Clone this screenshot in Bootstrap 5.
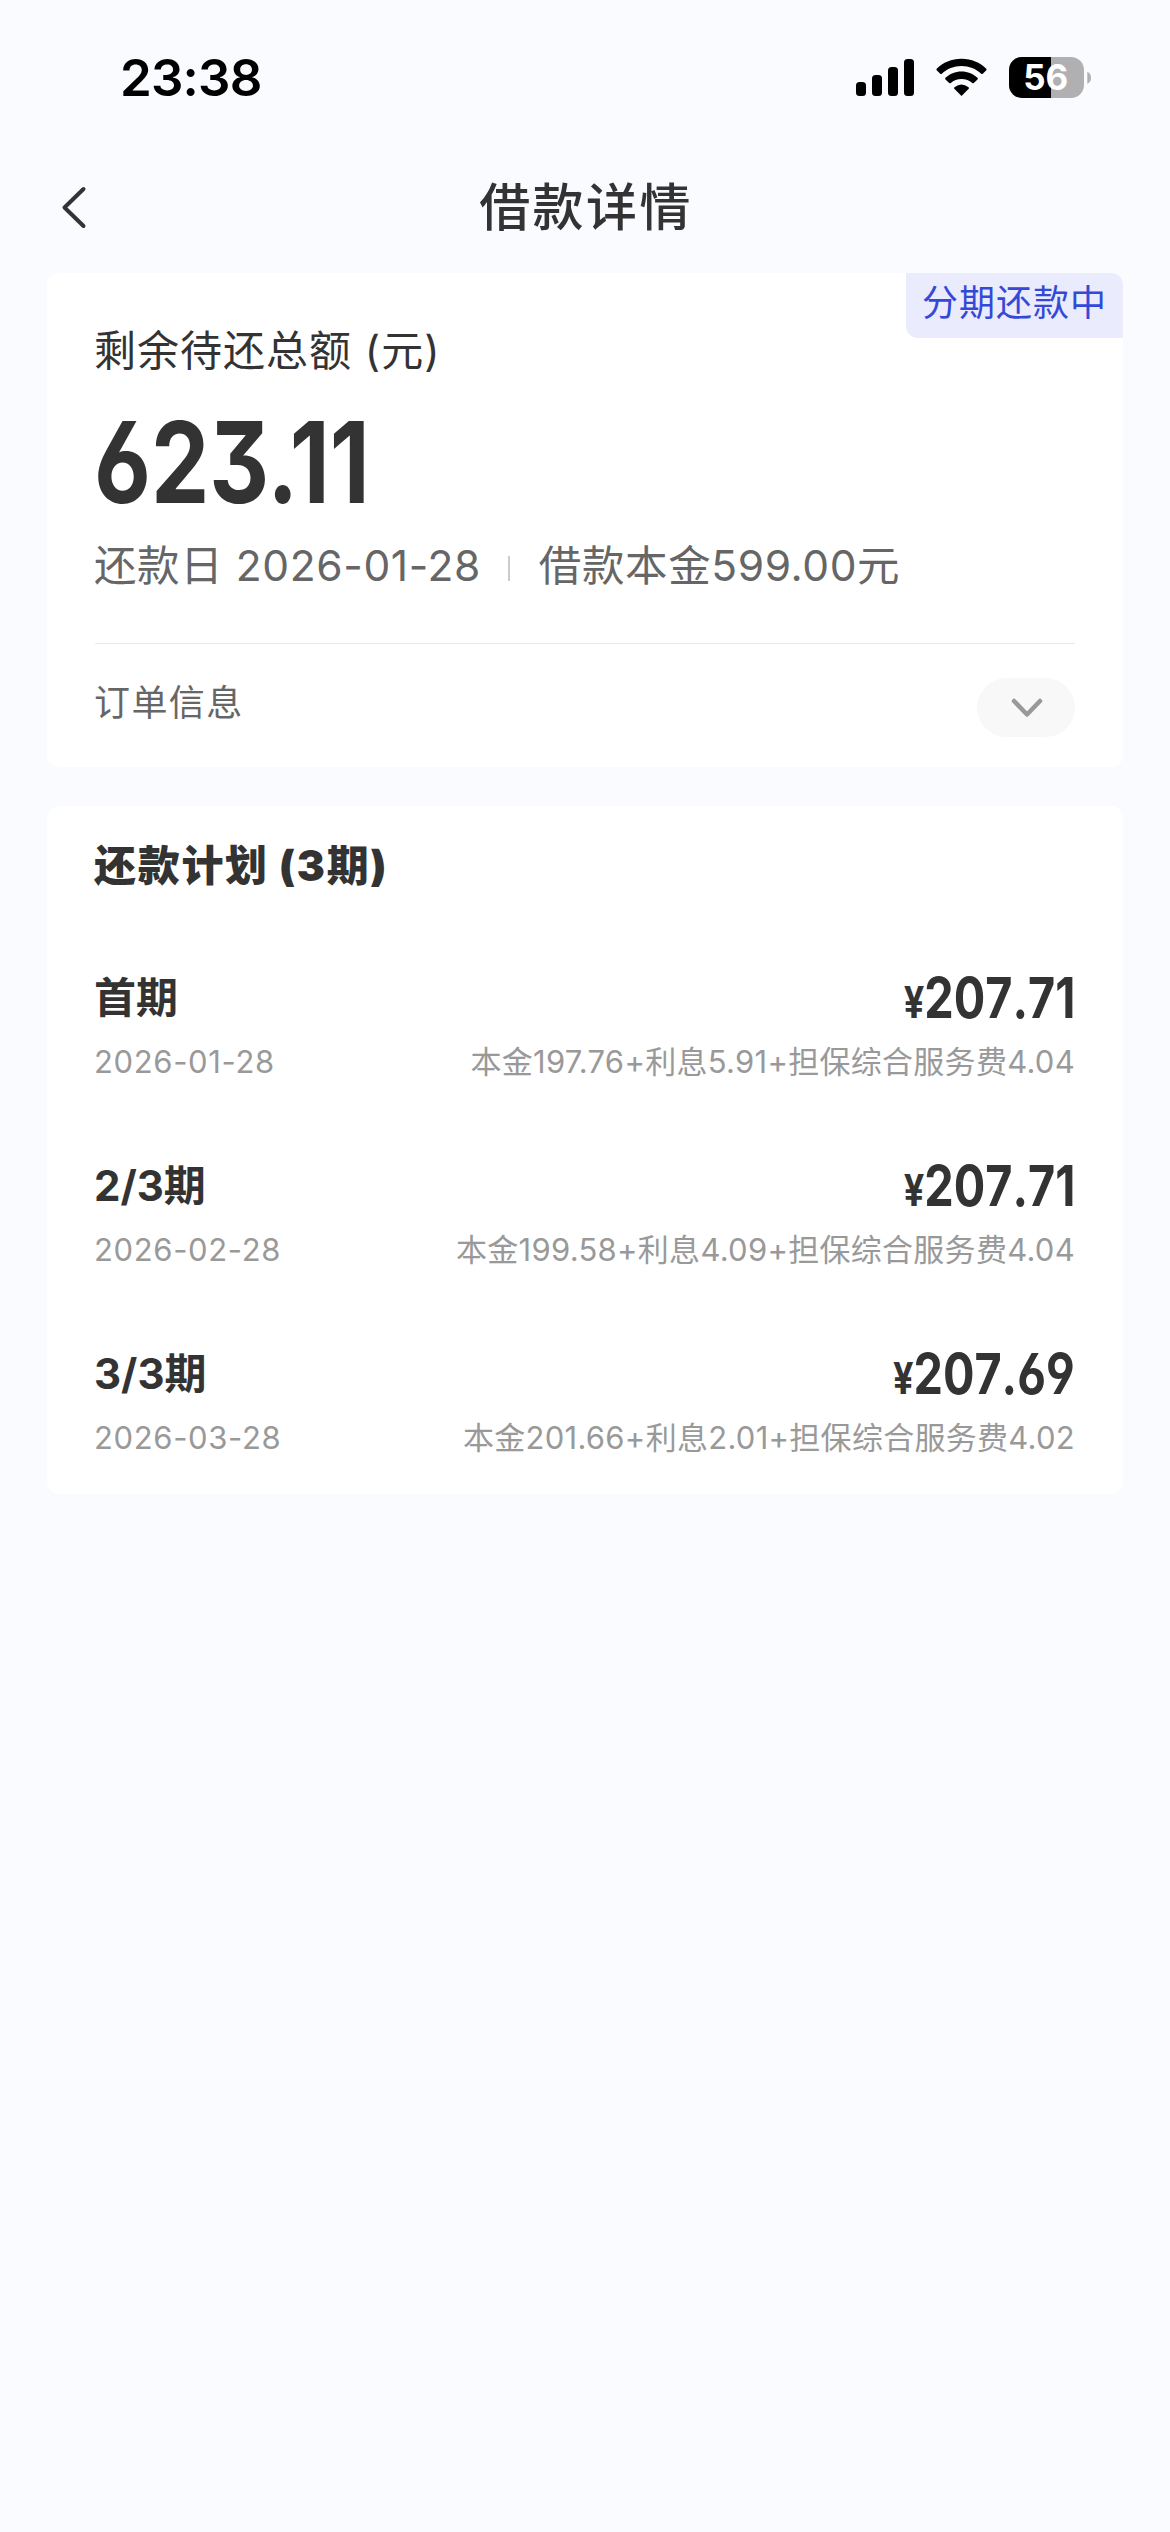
<!DOCTYPE html>
<html lang="zh-CN">
<head>
<meta charset="utf-8">
<meta name="viewport" content="width=device-width, initial-scale=1">
<title>借款详情</title>
<link href="https://cdn.jsdelivr.net/npm/bootstrap@5.3.0/dist/css/bootstrap.min.css" rel="stylesheet">
<style>
  body { background: #fafbff; color: #333; font-family: Inter, "Noto Sans CJK SC", sans-serif; min-height: 2532px; }
  .status-bar { height: 141px; padding: 14px 79px 0 120px; color: #000; }
  .clock { font-size: 51px; font-weight: 600; line-height: 60px; letter-spacing: -.8px; }
  .battery-level { font: 700 35px Inter, sans-serif; letter-spacing: 0; }
  .nav-head { height: 132px; }
  .back-link { left: 58px; top: 44px; line-height: 0; }
  .nav-name { font-size: 51px; font-weight: 500; line-height: 60px; letter-spacing: 2.4px; padding: 2px 0 0 2px; }
  .panel { margin: 0 47px 39px; padding: 0 48px 0 47px; border: 0; border-radius: 12px; background: #fff; }
  .state-tag { top: 0; right: 0; width: 217px; height: 65px; line-height: 61px; font-size: 36px; letter-spacing: 1px; color: #3549d8; background: #eaebfc; border-radius: 0 12px 0 12px; }
  .caption-line { font-size: 42px; line-height: 60px; letter-spacing: 1px; padding-top: 48px; }
  .din { font-weight: 700; font-feature-settings: "ss01", "cv03", "cv04"; }
  .total-sum { font-size: 113px; line-height: 90px; margin-top: 36px; transform: scaleX(.82); transform-origin: left; }
  .due-line { font-size: 42.5px; line-height: 60px; letter-spacing: .6px; margin-top: 29px; color: #666; }
  .tick { width: 2px; height: 25px; background: #ccc; margin: 4px 29px 0 27px; }
  .order-row { margin: 47px 0 0 1px; border-top: 1px solid #e9e9e9; height: 124px; color: #666; }
  .order-name { font-size: 36px; line-height: 50px; letter-spacing: 1.4px; margin: 0 0 5px -1px; }
  .pill { width: 98px; height: 59px; background: #f8f8f8; margin-top: 4px; }
  .plan-panel { padding-top: 30px; padding-bottom: 36px; }
  .plan-name { font-size: 42px; font-weight: 900; line-height: 60px; letter-spacing: 1.7px; margin-bottom: 72px; }
  .term { margin-bottom: 74px; }
  .term:last-child { margin-bottom: 0; }
  .term-name { font-size: 42px; font-weight: 700; line-height: 60px; }
  .term-sum { font-size: 57px; line-height: 60px; font-kerning: none; transform: scaleX(.82); transform-origin: right; }
  .term-sum span { font-size: 44px; line-height: 0; }
  .term-note { font-size: 31px; line-height: 40px; margin-top: 14px; color: #999; letter-spacing: .28px; }
  .term-date { letter-spacing: .65px; }
</style>
<script src="https://cdn.jsdelivr.net/npm/bootstrap@5.3.0/dist/js/bootstrap.bundle.min.js"></script>
</head>
<body>
<header>
  <div class="status-bar d-flex justify-content-between align-items-center">
    <span class="clock">23:38</span>
    <svg width="236" height="42" viewBox="855 57 236 42" role="img" aria-label="状态">
      <defs>
        <clipPath id="batteryBody"><rect x="1009" y="57" width="75" height="41" rx="13"/></clipPath>
      </defs>
      <rect x="856" y="82" width="10" height="14" rx="3.500"/>
      <rect x="872" y="75" width="10" height="21" rx="3.500"/>
      <rect x="888" y="67" width="10" height="29" rx="3.500"/>
      <rect x="904" y="59" width="10" height="37" rx="3.500"/>
      <path d="M961.500 96 L954.300 88.800 Q953.500 87.900 954.500 87.200 Q961.500 81.800 968.500 87.200 Q969.500 87.900 968.700 88.800 Z"/>
      <path d="M961.500 58.700 C971.500 58.700 980 62.500 986.300 68.700 Q987 69.500 986.300 70.300 L982.800 73.700 Q982 74.400 981.200 73.700 C976 68.800 969 66 961.500 66 C954 66 947 68.800 941.800 73.700 Q941 74.400 940.200 73.700 L936.700 70.300 Q936 69.500 936.700 68.700 C943 62.500 951.500 58.700 961.500 58.700 Z"/>
      <path d="M961.500 71.500 C967.800 71.500 973.300 73.900 977.500 77.800 Q978.300 78.600 977.500 79.400 L973.800 83 Q973 83.700 972.200 83 C969.400 80.500 965.600 79 961.500 79 C957.400 79 953.600 80.500 950.800 83 Q950 83.700 949.200 83 L945.500 79.400 Q944.700 78.600 945.500 77.800 C949.700 73.900 955.200 71.500 961.500 71.500 Z"/>
      <g clip-path="url(#batteryBody)">
        <rect x="1009" y="57" width="75" height="41" fill="#b0b0b2"/>
        <rect x="1009" y="57" width="42" height="41"/>
      </g>
      <path d="M1087.300 71.700 Q1091 73.200 1091 77.700 Q1091 82.200 1087.300 83.700 Z" fill="#b0b0b2"/>
      <text class="battery-level" x="1045.800" y="90.300" text-anchor="middle" fill="#fff">56</text>
    </svg>
  </div>
  <nav class="nav-head d-flex align-items-center justify-content-center position-relative">
    <a href="#" class="back-link position-absolute" aria-label="返回">
      <svg width="32" height="44" viewBox="0 0 32 44" fill="none" stroke="#333" stroke-width="4" stroke-linecap="round" stroke-linejoin="round"><path d="M25.500 4 L6.500 22.500 L25.500 41"/></svg>
    </a>
    <h1 class="nav-name mb-0">借款详情</h1>
  </nav>
</header>
<main>
  <section class="card panel">
    <span class="state-tag position-absolute text-center">分期还款中</span>
    <div class="caption-line">剩余待还总额 (元)</div>
    <div class="din total-sum">623.11</div>
    <div class="due-line d-flex align-items-center"><span>还款日 2026-01-28</span><i class="tick"></i><span>借款本金599.00元</span></div>
    <div class="order-row d-flex justify-content-between align-items-center">
      <span class="order-name">订单信息</span>
      <span class="pill rounded-pill d-flex align-items-center justify-content-center">
        <svg width="34" height="24" viewBox="0 0 34 24" fill="none" stroke="#999" stroke-width="4.500" stroke-linecap="round" stroke-linejoin="round"><path d="M5 5 L18 18.500 L31 5"/></svg>
      </span>
    </div>
  </section>
  <section class="card panel plan-panel">
    <h2 class="plan-name">还款计划 (3期)</h2>
    <div class="term">
      <div class="d-flex justify-content-between"><span class="term-name">首期</span><span class="din term-sum"><span>¥</span>207.71</span></div>
      <div class="term-note d-flex justify-content-between"><span class="term-date">2026-01-28</span><span>本金197.76+利息5.91+担保综合服务费4.04</span></div>
    </div>
    <div class="term">
      <div class="d-flex justify-content-between"><span class="term-name">2/3期</span><span class="din term-sum"><span>¥</span>207.71</span></div>
      <div class="term-note d-flex justify-content-between"><span class="term-date">2026-02-28</span><span>本金199.58+利息4.09+担保综合服务费4.04</span></div>
    </div>
    <div class="term">
      <div class="d-flex justify-content-between"><span class="term-name">3/3期</span><span class="din term-sum"><span>¥</span>207.69</span></div>
      <div class="term-note d-flex justify-content-between"><span class="term-date">2026-03-28</span><span>本金201.66+利息2.01+担保综合服务费4.02</span></div>
    </div>
  </section>
</main>
</body>
</html>
